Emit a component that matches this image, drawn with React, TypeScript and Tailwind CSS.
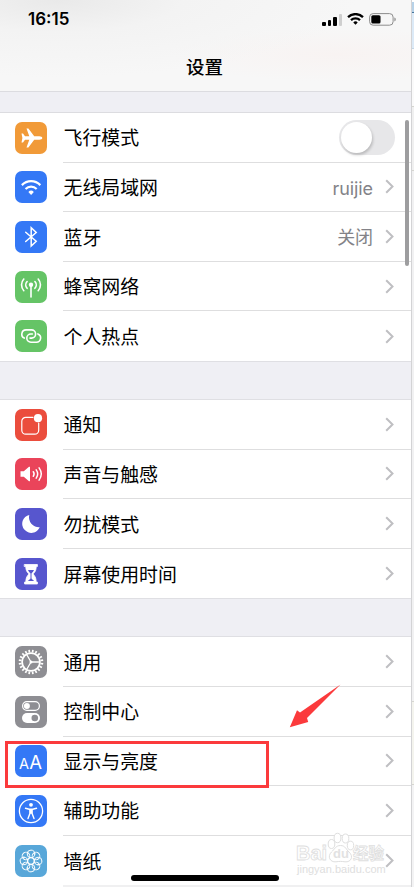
import { ReactNode } from 'react';

type Item = {
    label: string;
    color: string;
    icon: ReactNode;
    value?: string;
    toggle?: boolean;
};

function WifiShape() {
    return (
        <>
            <path d="M1.2 6.2a12.6 12.6 0 0 1 17.6 0" />
            <path d="M4.7 9.7a7.7 7.7 0 0 1 10.6 0" />
            <path d="M10 15.2l-2.6-2.8a3.8 3.8 0 0 1 5.2 0z" fill="currentColor" stroke="none" />
        </>
    );
}

function Glyph({ children }: { children: ReactNode }) {
    return (
        <svg viewBox="0 0 32 32" className="w-8 h-8" fill="none" stroke="currentColor" strokeWidth="1.4" strokeLinecap="round" strokeLinejoin="round">
            {children}
        </svg>
    );
}

const teeth = Array.from({ length: 20 }, (_, i) => i * 18);
const petals = Array.from({ length: 8 }, (_, i) => i * 45);

const groups: Item[][] = [
    [
        {
            label: '飞行模式',
            color: 'bg-[#f19a38]',
            toggle: true,
            icon: (
                <Glyph>
                    <path fill="currentColor" stroke="none" d="M27.3 16c0 1-1.3 1.7-3 1.7h-5.1l-5.8 7.7h-1.9l2.8-7.7H10l-2 2.7H6.5L7.4 16l-.9-4.4H8l2 2.7h4.3l-2.8-7.7h1.9l5.8 7.7h5.1c1.7 0 3 .7 3 1.7z" />
                </Glyph>
            ),
        },
        {
            label: '无线局域网',
            color: 'bg-[#3478f6]',
            value: 'ruijie',
            icon: (
                <Glyph>
                    <g transform="translate(5.6 7.3) scale(1.05 1.1)" strokeWidth="2.1" strokeLinecap="butt"><WifiShape /></g>
                </Glyph>
            ),
        },
        {
            label: '蓝牙',
            color: 'bg-[#3478f6]',
            value: '关闭',
            icon: (
                <Glyph>
                    <path d="M10.700 11.3l10.5 9-5 4.7V6.8l5 4.7-10.500 9" strokeWidth="1.5" strokeLinejoin="miter" />
                </Glyph>
            ),
        },
        {
            label: '蜂窝网络',
            color: 'bg-[#65c466]',
            icon: (
                <Glyph>
                    <circle cx="16" cy="13.8" r="2.2" fill="currentColor" stroke="none" />
                    <path d="M16 14v12" strokeWidth="1.6" />
                    <path d="M12.1 10.5a5 5 0 0 0 0 6.8M19.9 10.5a5 5 0 0 1 0 6.8M8.8 8a8.7 8.7 0 0 0 0 11.7M23.2 8a8.7 8.7 0 0 1 0 11.7" strokeWidth="1.6" />
                </Glyph>
            ),
        },
        {
            label: '个人热点',
            color: 'bg-[#65c466]',
            icon: (
                <Glyph>
                    <path d="M9.300 18.100A4.300 4.300 0 0 1 11 9.900h5.500a4.100 4.100 0 0 1 0 8.200h-1.500" strokeWidth="1.6" />
                    <path d="M22.900 13.900a4.300 4.300 0 0 1-1.500 8.300h-5.500a4.100 4.100 0 0 1 0-8.200h1.500" strokeWidth="1.6" />
                </Glyph>
            ),
        },
    ],
    [
        {
            label: '通知',
            color: 'bg-[#eb4d3d]',
            icon: (
                <Glyph>
                    <path d="M18 8.300h-7.200a4 4 0 0 0-4 4v8.900a4 4 0 0 0 4 4h8.900a4 4 0 0 0 4-4V14" strokeWidth="1.200" />
                    <circle cx="23" cy="9.200" r="4.100" fill="currentColor" stroke="none" />
                </Glyph>
            ),
        },
        {
            label: '声音与触感',
            color: 'bg-[#ea445a]',
            icon: (
                <Glyph>
                    <path d="M5.500 13.300h3.300l5.200-4.500a.6.6 0 0 1 1 .5v13.400a.6.6 0 0 1-1 .5l-5.200-4.500H5.500z" fill="currentColor" stroke="none" />
                    <path d="M18.300 13.700a4 4 0 0 1 0 4.600M21.200 11.900a7 7 0 0 1 0 8.200M24.100 9.900a10.500 10.500 0 0 1 0 12.200" strokeWidth="1.500" />
                </Glyph>
            ),
        },
        {
            label: '勿扰模式',
            color: 'bg-[#5756ce]',
            icon: (
                <Glyph>
                    <path d="M14.300 6.900a9.100 9.100 0 1 0 10.400 12.400A10 10 0 0 1 14.300 6.900z" fill="currentColor" stroke="none" />
                </Glyph>
            ),
        },
        {
            label: '屏幕使用时间',
            color: 'bg-[#5756ce]',
            icon: (
                <Glyph>
                    <path d="M9.600 6.500h12.800v2h-1.200c0 4.500-1.600 5.700-3 7.500 1.400 1.800 3 3.500 3 8h1.200v2H9.600v-2h1.200c0-4.500 1.600-6.200 3-8-1.400-1.800-3-3-3-7.500H9.600z" fill="currentColor" strokeWidth=".8" />
                    <path d="M13 12.100h6c-.5 1.500-1.800 2.600-2.500 3.500v4.600c.3 1 1.300 1.500 2.800 2.800h-6.600c1.500-1.300 2.500-1.800 2.800-2.800v-4.600c-.7-.9-2-2-2.500-3.500z" fill="#5756ce" stroke="none" />
                </Glyph>
            ),
        },
    ],
    [
        {
            label: '通用',
            color: 'bg-[#8e8e93]',
            icon: (
                <Glyph>
                    <circle cx="16" cy="16" r="8.900" strokeWidth="1.800" />
                    {teeth.map((a) => (
                        <path key={a} d="M16 6.500V3.700" strokeWidth="1.700" strokeLinecap="butt" transform={`rotate(${a + 9} 16 16)`} />
                    ))}
                    <circle cx="16" cy="16" r="1.500" fill="currentColor" stroke="none" />
                    <path d="M16 16h8M16 16l-4.200-7.300M16 16l-4.200 7.300" strokeWidth="1.300" />
                </Glyph>
            ),
        },
        {
            label: '控制中心',
            color: 'bg-[#8e8e93]',
            icon: (
                <Glyph>
                    <rect x="7.600" y="5.700" width="16.800" height="8.600" rx="4.300" strokeWidth="1.200" />
                    <circle cx="11.900" cy="10" r="3" fill="currentColor" stroke="none" />
                    <rect x="7" y="17" width="18" height="10" rx="5" fill="currentColor" stroke="none" />
                    <circle cx="19.800" cy="22" r="3.300" fill="#8e8e93" stroke="none" />
                </Glyph>
            ),
        },
        {
            label: '显示与亮度',
            color: 'bg-[#3478f6]',
            icon: (
                <span className="flex items-baseline pt-px leading-none text-white font-['Inter',sans-serif]">
                    <span className="text-[14.500px]">A</span>
                    <span className="text-[18.500px]">A</span>
                </span>
            ),
        },
        {
            label: '辅助功能',
            color: 'bg-[#3478f6]',
            icon: (
                <Glyph>
                    <circle cx="16" cy="16" r="11.600" strokeWidth="1.300" />
                    <circle cx="16" cy="9.800" r="1.900" fill="currentColor" stroke="none" />
                    <path d="M10.500 13.300l3.700.9h3.600l3.700-.9M14.900 14.500v4l-1.900 5M17.100 14.500v4l1.900 5" strokeWidth="1.400" />
                    <path d="M14.800 14h2.400v4.700h-2.400z" fill="currentColor" stroke="none" />
                </Glyph>
            ),
        },
        {
            label: '墙纸',
            color: 'bg-[#58a7d9]',
            icon: (
                <Glyph>
                    {petals.map((a) => (
                        <circle key={a} cx="16" cy="8.900" r="3.800" strokeWidth="1" transform={`rotate(${a} 16 16)`} />
                    ))}
                    <circle cx="16" cy="16" r="3.300" strokeWidth=".9" />
                </Glyph>
            ),
        },
    ],
];

function StatusBar() {
    return (
        <div className="flex h-[39px] items-center justify-between pl-[28px] pr-[15px]">
            <span className="font-['Inter',sans-serif] text-[17px] font-semibold">16:15</span>
            <div className="flex items-center gap-[5px]">
                <div className="flex items-end gap-[2px]">
                    <i className="h-[4px] w-[3.500px] rounded-[1px] bg-black" />
                    <i className="h-[6px] w-[3.500px] rounded-[1px] bg-black" />
                    <i className="h-[9px] w-[3.500px] rounded-[1px] bg-black" />
                    <i className="h-[12px] w-[3.500px] rounded-[1px] bg-[#cfcfcf]" />
                </div>
                <svg viewBox="0 2 20 14" className="h-[13px] w-[17px]" fill="none" stroke="currentColor" strokeWidth="2.700">
                    <WifiShape />
                </svg>
                <svg viewBox="0 0 27 13" className="h-[13px] w-[27px]">
                    <rect x=".6" y=".6" width="23.500" height="11.600" rx="3.500" fill="none" stroke="#8d8d8d" strokeWidth="1" />
                    <rect x="2.300" y="2.300" width="9.200" height="8.300" rx="1.500" />
                    <path d="M25.400 4.500c1.800.7 1.800 3.200 0 3.900z" fill="#8d8d8d" />
                </svg>
            </div>
        </div>
    );
}

function Row({ item, last }: { item: Item; last: boolean }) {
    return (
        <div className="flex h-[49.600px] items-center pl-[14.500px]">
            <div className={`flex h-8 w-8 shrink-0 items-center justify-center overflow-hidden rounded-[7px] text-white ${item.color}`}>
                {item.icon}
            </div>
            <div className={`ml-[16.500px] flex h-full flex-1 items-center justify-between ${last ? '' : 'border-b border-[#dededf]'}`}>
                <span className="pl-[0.500px] pt-[5px] text-[18.900px] leading-none text-black">{item.label}</span>
                {item.toggle ? (
                    <div className="mr-4 h-[35px] w-[56px] rounded-full bg-[#e7e7e9] p-[2px]">
                        <div className="h-[31px] w-[31px] rounded-full bg-white shadow-[1px_2px_3px_rgba(0,0,0,0.2)]" />
                    </div>
                ) : (
                    <div className="mr-[17px] flex items-center gap-[12px] text-[#838388]">
                        {item.value && <span className="pt-[4px] text-[18px] leading-none tracking-[-0.1px]">{item.value}</span>}
                        <svg viewBox="0 0 9 15" className="h-[15px] w-[9px]" fill="none" stroke="#bfbfc2" strokeWidth="2">
                            <path d="M1.200 1.200l6.300 6.300-6.300 6.300" />
                        </svg>
                    </div>
                )}
            </div>
        </div>
    );
}

function Watermark() {
    return (
        <div className="absolute left-[296px] top-[832px] h-[46px] w-[92px] leading-none text-white [-webkit-text-stroke:0.8px_#dedede]">
            <svg viewBox="0 0 92 46" className="absolute inset-0" fill="#fff" stroke="#dfdfdf" strokeWidth="1">
                <ellipse cx="35.500" cy="12" rx="3.300" ry="4.500" />
                <ellipse cx="41.500" cy="6" rx="3.400" ry="4.700" />
                <ellipse cx="49.500" cy="6.500" rx="3.300" ry="4.500" />
                <ellipse cx="54.500" cy="13.500" rx="3.200" ry="4.300" />
                <path d="M44.500 13.500c5 0 5.500 4 8.500 6.500 5 4.500 2 10.500-4 9.800-3-.5-6-.5-9 0-6 .7-9-5.300-4.500-9.800 3-2.500 4-6.500 9-6.500z" />
            </svg>
            <span className="absolute left-0 top-[11px] font-['Liberation_Sans',sans-serif] text-[20px] font-bold">Bai</span>
            <span className="absolute left-[37px] top-[15px] font-['Liberation_Sans',sans-serif] text-[13px] font-bold text-[#e2e2e2] [-webkit-text-stroke:0px]">du</span>
            <span className="absolute left-[57px] top-[14px] whitespace-nowrap text-[15.500px] font-bold">经验</span>
            <span className="absolute left-[1px] top-[32px] font-['Liberation_Sans',sans-serif] text-[11px] text-[#dedede] [-webkit-text-stroke:0px]">jingyan.baidu.com</span>
        </div>
    );
}

export default function App() {
    return (
        <div className="relative flex h-[887px] w-[414px] overflow-hidden bg-white font-['Inter','Noto_Sans_CJK_SC',sans-serif]">
            <div className="flex w-[411px] shrink-0 flex-col">
                <header className="h-[91px] shrink-0 bg-[#f7f7f7] bg-[radial-gradient(ellipse_at_14%_0%,#e9e9e9_0%,#f3f3f3_25%,transparent_60%),radial-gradient(ellipse_at_82%_60%,#f8f3f2_0%,transparent_35%)]">
                    <StatusBar />
                    <h1 className="pt-[19px] pr-[2px] text-center text-[18.500px] leading-none font-medium text-black">设置</h1>
                </header>
                <div className="h-[22px] shrink-0 border-y border-[#dcdce0] bg-[#efeff4]" />
                {groups.map((group, g) => (
                    <div key={g} className="shrink-0">
                        {g > 0 && <div className="h-[39px] border-y border-[#dfdfe3] bg-[#efeff4]" />}
                        {group.map((item, i) => (
                            <Row key={item.label} item={item} last={i === group.length - 1} />
                        ))}
                    </div>
                ))}
                <div className="ml-[63px] h-[3px] shrink-0 bg-[#f0f0f1]" />
            </div>
            <div className="flex w-[3px] flex-col border-l border-[#d3d3d5]">
                <div className="h-[13px] border-t-2 border-b border-white border-b-[#44749b] bg-[#b7d2e8]" />
                <div className="h-[36px] border-b border-[#c4d6e5] bg-[#dceaf7]" />
                <div className="h-[57px] bg-[#fafafa]" />
                <div className="h-[65px] border-y border-[#d5d5d0] bg-[#f0f0f0]" />
                <div className="h-[530px] bg-[#f1f1f2]" />
                <div className="h-[84px] border-y border-[#d6d6d0] bg-[#f4f4ee]" />
                <div className="flex-1 bg-[#f3f3f4]" />
            </div>

            <div className="absolute left-[405px] top-[120px] h-[146px] w-[4px] rounded-full bg-[#9d9d9f]" />
            <div className="absolute left-[5px] top-[741px] h-[47px] w-[264px] border-[3px] border-[#fb3a3c]" />
            <svg viewBox="0 0 52 44" className="absolute left-[289px] top-[684px] h-[44px] w-[52px]" fill="#fb3a3c">
                <path d="M51.500 .5L18 34l1.200 4L.8 43.200 8 26.300l3 2.200z" />
            </svg>
            <Watermark />
            <div className="absolute left-[131px] top-[875px] h-[6px] w-[148px] rounded-full bg-black" />
        </div>
    );
}
